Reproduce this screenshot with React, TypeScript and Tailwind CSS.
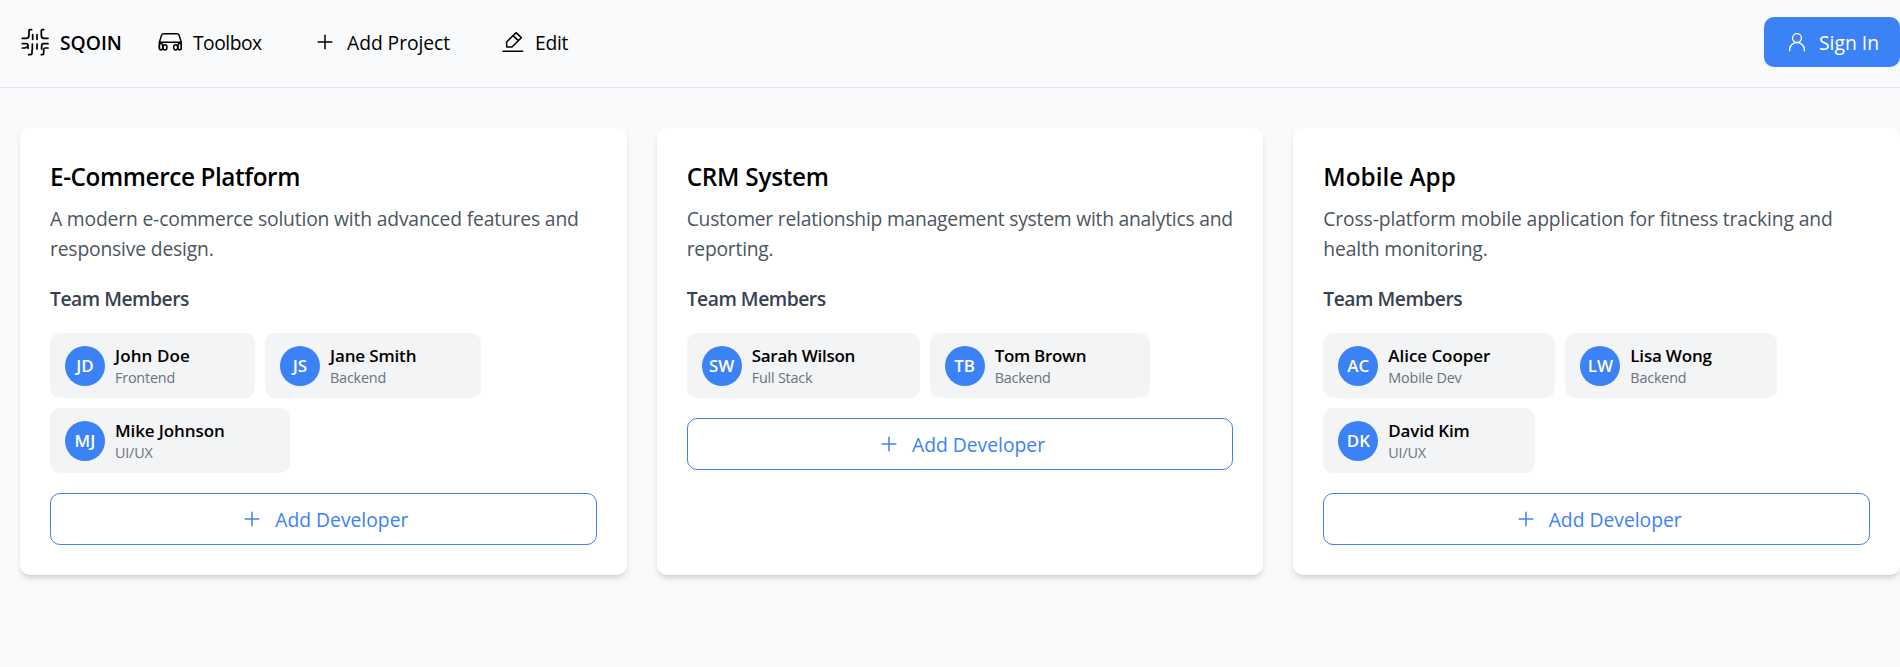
import type { ReactNode } from "react";

type Member = { initials: string; name: string; role: string; width: string; tracking: string };
type Project = { title: string; titleClass: string; lines: [string, string]; textClass: string; members: Member[] };

const projects: Project[] = [
  {
    title: "E-Commerce Platform",
    titleClass: "tracking-[-0.4px]",
    lines: ["A modern e-commerce solution with advanced features and", "responsive design."],
    textClass: "tracking-[-0.17px]",
    members: [
      { initials: "JD", name: "John Doe", role: "Frontend", width: "w-[205px]", tracking: "tracking-[0.1px]" },
      { initials: "JS", name: "Jane Smith", role: "Backend", width: "w-[216px]", tracking: "tracking-[-0.15px]" },
      { initials: "MJ", name: "Mike Johnson", role: "UI/UX", width: "w-[240px]", tracking: "tracking-[-0.1px]" },
    ],
  },
  {
    title: "CRM System",
    titleClass: "tracking-[-0.25px]",
    lines: ["Customer relationship management system with analytics and", "reporting."],
    textClass: "tracking-[-0.23px]",
    members: [
      { initials: "SW", name: "Sarah Wilson", role: "Full Stack", width: "w-[233px]", tracking: "tracking-[-0.27px]" },
      { initials: "TB", name: "Tom Brown", role: "Backend", width: "w-[220px]", tracking: "tracking-[-0.3px]" },
    ],
  },
  {
    title: "Mobile App",
    titleClass: "tracking-[0px]",
    lines: ["Cross-platform mobile application for fitness tracking and", "health monitoring."],
    textClass: "tracking-[-0.13px]",
    members: [
      { initials: "AC", name: "Alice Cooper", role: "Mobile Dev", width: "w-[232px]", tracking: "tracking-[-0.05px]" },
      { initials: "LW", name: "Lisa Wong", role: "Backend", width: "w-[212px]", tracking: "tracking-[-0.2px]" },
      { initials: "DK", name: "David Kim", role: "UI/UX", width: "w-[212px]", tracking: "tracking-[-0.2px]" },
    ],
  },
];

function Icon({ box, className, weight, children }: { box: string; className: string; weight: number; children: ReactNode }) {
  return (
    <svg
      viewBox={box}
      className={className}
      fill="none"
      stroke="currentColor"
      strokeWidth={weight}
      strokeLinecap="round"
      strokeLinejoin="round"
      aria-hidden="true"
    >
      {children}
    </svg>
  );
}

function Logo() {
  return (
    <Icon box="63 83 84 84" className="h-7 w-7 shrink-0" weight={5.2}>
      <path d="M95 88h-5q-3 0-3 3v12q0 10-7 11H67M98 103v14M111 103v14M131 88h-4q-3 0-3 3v14q0 9 8 9h12" />
      <path d="M67 130h12q5 0 5 6v8M67 143h9l3-3M97 131v13q0 6-1 8v7q0 4-4 4h-6M111 131v15M144 130h-13q-6 0-6 7v9M144 143h-9q-4 0-4 5v11q0 4-4 4h-3" />
    </Icon>
  );
}

function CarIcon() {
  return (
    <Icon box="472 93 72 60" className="h-5 w-6 shrink-0" weight={4.4}>
      <path d="M476 144v-20l7-22q2-4 5-4h42q3 0 5 4l7 22v20M476 124h66" />
      <ellipse cx="481" cy="137" rx="5" ry="10" />
      <ellipse cx="493" cy="139" rx="6" ry="8" />
      <ellipse cx="525" cy="139" rx="6" ry="8" />
      <ellipse cx="537" cy="137" rx="5" ry="10" />
    </Icon>
  );
}

function PlusIcon() {
  return (
    <Icon box="0 0 16 16" className="h-4 w-4 shrink-0" weight={1.5}>
      <path d="M8 1.200v13.600M1.200 8h13.600" />
    </Icon>
  );
}

function PencilIcon() {
  return (
    <Icon box="635 94 66 66" className="h-[22px] w-[22px] shrink-0" weight={4.5}>
      <path d="M649 142v-15l28-28 16 15-28 28zM668 108l16 15M638 155h59" />
    </Icon>
  );
}

function UserIcon() {
  return (
    <Icon box="142 97 55 60" className="h-5 w-[18px] shrink-0" weight={4.2}>
      <circle cx="169.500" cy="115" r="13.500" />
      <path d="M147 154v-3c0-12 9-22 22.500-22s22.500 10 22.500 22v3" />
    </Icon>
  );
}

function Header() {
  return (
    <header className="flex h-[88px] items-center border-b border-[#e5e7eb] pb-[3px] pl-[21px] text-[19.3px] leading-[30px] text-black">
      <div className="flex items-center gap-[11px]">
        <Logo />
        <span className="w-[98px] pt-px font-semibold">SQOIN</span>
      </div>
      <div className="flex items-center gap-[11px]">
        <CarIcon />
        <span className="w-[124px] pt-px tracking-[-0.5px]">Toolbox</span>
      </div>
      <div className="flex items-center gap-[14px]">
        <PlusIcon />
        <span className="w-[155px] pt-px tracking-[-0.05px]">Add Project</span>
      </div>
      <div className="flex items-center gap-[11px]">
        <PencilIcon />
        <span className="pt-px tracking-[-0.3px]">Edit</span>
      </div>
      <button className="ml-auto flex h-[50px] w-[136px] items-center rounded-[10px] bg-[#3b82f6] pl-[24px] text-white">
        <UserIcon />
        <span className="pt-px pl-[13px]">Sign In</span>
      </button>
    </header>
  );
}

function MemberChip({ member }: { member: Member }) {
  return (
    <div className={`${member.width} flex h-[65px] items-center gap-[10px] rounded-[10px] bg-[#f3f4f6] px-[15px]`}>
      <div className="flex h-10 w-10 shrink-0 items-center justify-center rounded-full bg-[#3b82f6] text-[17px] leading-[25px] font-semibold text-white">
        {member.initials}
      </div>
      <div className="whitespace-nowrap">
        <div className={`${member.tracking} text-[17px] leading-[25px] font-semibold text-black`}>{member.name}</div>
        <div className="text-[14.4px] leading-5 tracking-[-0.2px] text-[#6b7280]">{member.role}</div>
      </div>
    </div>
  );
}

function ProjectCard({ project }: { project: Project }) {
  return (
    <section className="rounded-[10px] bg-white px-[30px] pt-[31px] pb-[30px] shadow-[0_5px_7.5px_-1px_rgba(0,0,0,0.1),0_2.5px_5px_-2px_rgba(0,0,0,0.1)]">
      <h2 className={`${project.titleClass} mb-[10px] text-[24.3px] leading-[35px] font-semibold text-black`}>{project.title}</h2>
      <p className={`${project.textClass} mb-5 text-[19.3px] leading-[30px] whitespace-nowrap text-[#4b5563]`}>
        {project.lines[0]}
        <br />
        {project.lines[1]}
      </p>
      <h3 className="mb-[19px] text-[19.3px] leading-[30px] font-semibold tracking-[-0.48px] text-[#374151]">Team Members</h3>
      <div className="mb-5 flex flex-wrap gap-[10px]">
        {project.members.map((member) => (
          <MemberChip key={member.name} member={member} />
        ))}
      </div>
      <button className="flex h-[52px] w-full items-center justify-center gap-[15px] rounded-[10px] border border-[#3b82f6] pl-[6px] text-[19.3px] leading-[30px] text-[#3b82f6]">
        <PlusIcon />
        <span className="pt-px">Add Developer</span>
      </button>
    </section>
  );
}

export default function App() {
  return (
    <div className="min-h-screen bg-[#f9fafc] font-['Open_Sans','Noto_Sans',sans-serif]">
      <Header />
      <main className="grid grid-cols-3 gap-[30px] pt-10 pl-5">
        {projects.map((project) => (
          <ProjectCard key={project.title} project={project} />
        ))}
      </main>
    </div>
  );
}
